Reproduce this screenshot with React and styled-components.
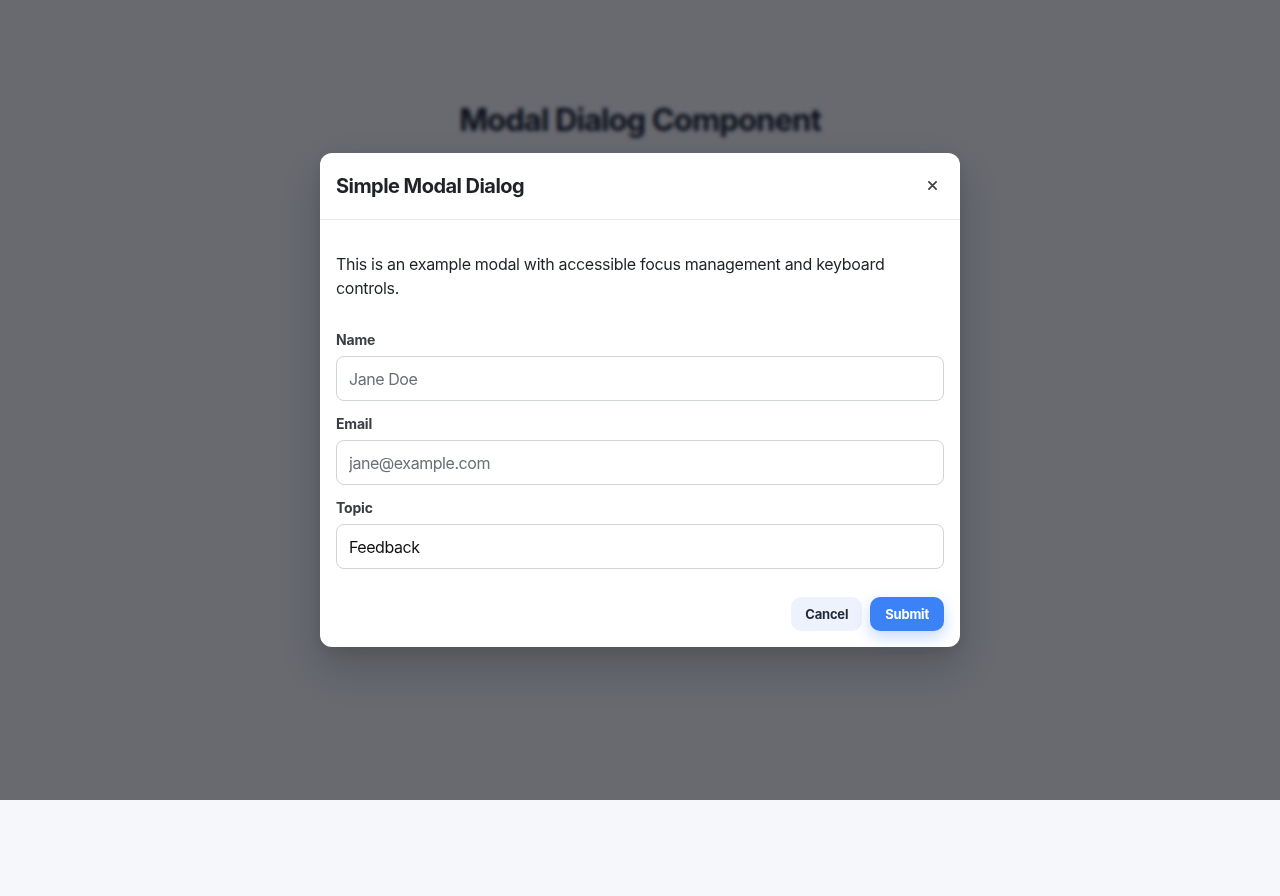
import React from "react";
import styled, { createGlobalStyle } from "styled-components";

const GlobalStyle = createGlobalStyle`
  * { box-sizing: border-box; }
  body {
    margin: 0;
    background: #f5f7fb;
    font-family: Inter, "Noto Sans", "Liberation Sans", sans-serif;
    color: #111827;
  }
`;

const Page = styled.main`
  position: relative;
  height: 800px;
  padding-top: 101px;
  text-align: center;
`;

const Heading = styled.h1`
  margin: 0;
  font-size: 31px;
  line-height: 38px;
  font-weight: 700;
  letter-spacing: -0.9px;
  color: #111827;
`;

const Overlay = styled.div`
  position: absolute;
  inset: 0;
  display: flex;
  align-items: center;
  justify-content: center;
  background: rgba(10, 12, 20, 0.6);
  backdrop-filter: blur(2px);
`;

const Dialog = styled.div`
  width: 640px;
  background: #fff;
  border-radius: 12px;
  text-align: left;
  box-shadow: 0 20px 40px rgba(0, 0, 0, 0.18), 0 4px 12px rgba(0, 0, 0, 0.08);
`;

const Header = styled.header`
  display: flex;
  align-items: center;
  justify-content: space-between;
  height: 67px;
  padding: 0 16px;
  border-bottom: 1px solid #e5e7eb;
`;

const Title = styled.h2`
  margin: 0;
  font-size: 20px;
  font-weight: 700;
  color: #1f2328;
  letter-spacing: -0.55px;
`;

const CloseButton = styled.button`
  width: 24px;
  height: 24px;
  display: flex;
  align-items: center;
  justify-content: center;
  border: none;
  background: transparent;
  color: #3f4247;
  padding: 0;
  margin-top: -2px;
  cursor: pointer;
`;

const Body = styled.div`
  padding: 32px 16px 16px;
`;

const Intro = styled.p`
  margin: 0 0 30px;
  font-size: 16px;
  line-height: 24px;
  color: #1f2328;
  letter-spacing: -0.3px;
`;

const Field = styled.div`
  display: flex;
  flex-direction: column;
  margin-bottom: 13px;
`;

const Label = styled.label`
  font-size: 14px;
  line-height: 20px;
  font-weight: 700;
  color: #3a3d42;
  margin-bottom: 6px;
  letter-spacing: -0.2px;
`;

const Input = styled.input`
  height: 45px;
  padding: 0 12px;
  border: 1px solid #d1d3da;
  border-radius: 8px;
  font-family: inherit;
  font-size: 16px;
  letter-spacing: -0.45px;
  color: #111;
  background: #fff;
  outline: none;
  &::placeholder {
    color: #6b6f76;
  }
`;

const Footer = styled.div`
  display: flex;
  justify-content: flex-end;
  gap: 8px;
  margin-top: 28px;
`;

const Button = styled.button`
  height: 34px;
  padding: 0 ${(p) => (p.$primary ? "15px" : "14px")};
  border: none;
  border-radius: 10px;
  font-family: inherit;
  font-size: 13px;
  font-weight: 700;
  letter-spacing: -0.2px;
  cursor: pointer;
  background: ${(p) => (p.$primary ? "#3b82f6" : "#eef2fd")};
  color: ${(p) => (p.$primary ? "#fff" : "#1f2937")};
  box-shadow: ${(p) =>
    p.$primary ? "0 6px 16px rgba(59, 130, 246, 0.3)" : "none"};
`;

function CloseIcon() {
  return (
    <svg width="9" height="9" viewBox="0 0 10 10">
      <path
        d="M1 1L9 9M9 1L1 9"
        stroke="currentColor"
        strokeWidth="1.9"
        strokeLinecap="round"
      />
    </svg>
  );
}

export default function App() {
  return (
    <>
      <GlobalStyle />
      <Page>
        <Heading>Modal Dialog Component</Heading>
        <Overlay>
          <Dialog role="dialog" aria-modal="true" aria-labelledby="dlg-title">
            <Header>
              <Title id="dlg-title">Simple Modal Dialog</Title>
              <CloseButton aria-label="Close">
                <CloseIcon />
              </CloseButton>
            </Header>
            <Body>
              <Intro>
                This is an example modal with accessible focus management and
                keyboard controls.
              </Intro>
              <Field>
                <Label htmlFor="name">Name</Label>
                <Input id="name" placeholder="Jane Doe" />
              </Field>
              <Field>
                <Label htmlFor="email">Email</Label>
                <Input id="email" placeholder="jane@example.com" />
              </Field>
              <Field>
                <Label htmlFor="topic">Topic</Label>
                <Input id="topic" defaultValue="Feedback" />
              </Field>
              <Footer>
                <Button>Cancel</Button>
                <Button $primary>Submit</Button>
              </Footer>
            </Body>
          </Dialog>
        </Overlay>
      </Page>
    </>
  );
}
